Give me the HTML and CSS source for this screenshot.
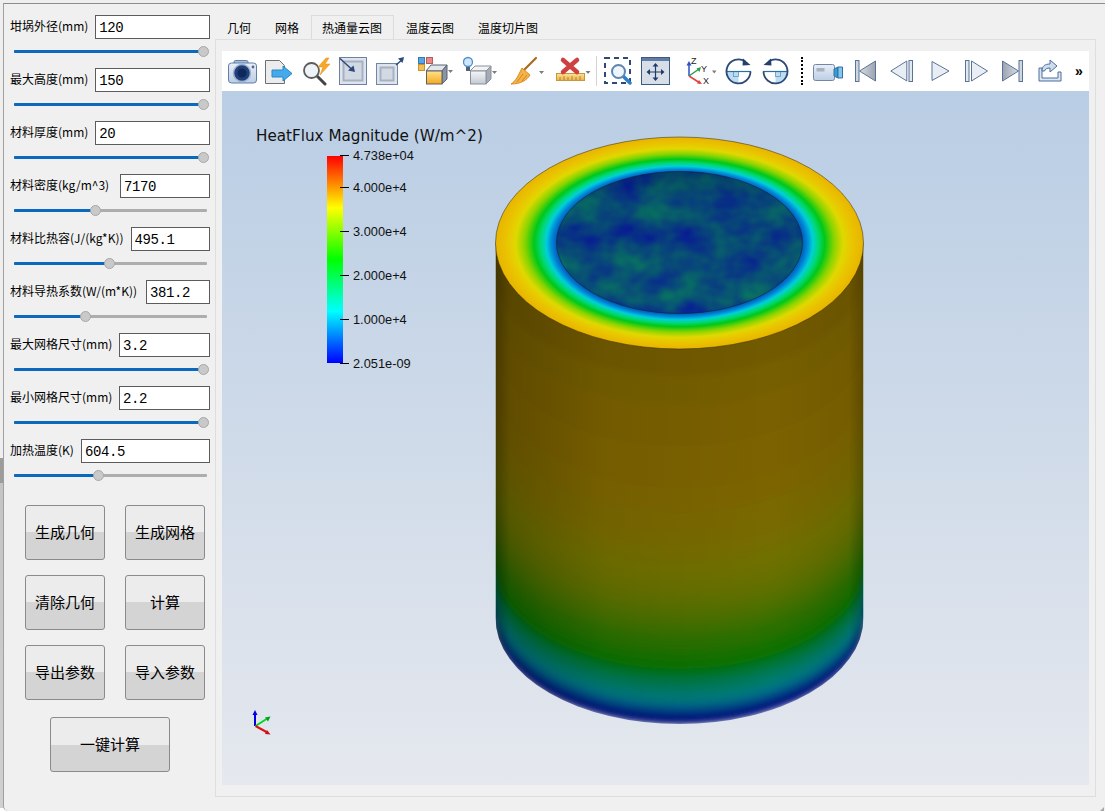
FILE: index.html
```html
<!DOCTYPE html>
<html lang="zh">
<head>
<meta charset="utf-8">
<title>坩埚热分析</title>
<link rel="stylesheet" href="styles.css">
</head>
<body>
<svg class="defs" aria-hidden="true">
  <defs>
    <linearGradient id="gBlue" x1="0" y1="0" x2="0" y2="1"><stop offset="0" stop-color="#e9eff7"/><stop offset="1" stop-color="#bccde3"/></linearGradient>
    <linearGradient id="gGrey" x1="0" y1="0" x2="1" y2="0"><stop offset="0" stop-color="#d9dde3"/><stop offset="1" stop-color="#9aa3b0"/></linearGradient>
    <linearGradient id="gGreyR" x1="1" y1="0" x2="0" y2="0"><stop offset="0" stop-color="#d9dde3"/><stop offset="1" stop-color="#9aa3b0"/></linearGradient>
    <linearGradient id="gGold" x1="0" y1="0" x2="0" y2="1"><stop offset="0" stop-color="#ffe38a"/><stop offset="1" stop-color="#f6a81e"/></linearGradient>
    <linearGradient id="gCube" x1="0" y1="0" x2="0" y2="1"><stop offset="0" stop-color="#f5f6f8"/><stop offset="1" stop-color="#c4c9d1"/></linearGradient>
    <linearGradient id="gRuler" x1="0" y1="0" x2="0" y2="1"><stop offset="0" stop-color="#fbe29a"/><stop offset="1" stop-color="#e9b44a"/></linearGradient>
  </defs>
</svg>
<div class="window">
  <aside class="sidebar">
    <div class="param"><div class="field"><label class="field-label">坩埚外径(mm)</label><input class="field-input" value="120"></div><div class="slider"><div class="fill" style="width:189px"></div><div class="knob" style="left:184px"></div></div></div>
    <div class="param"><div class="field"><label class="field-label">最大高度(mm)</label><input class="field-input" value="150"></div><div class="slider"><div class="fill" style="width:189px"></div><div class="knob" style="left:184px"></div></div></div>
    <div class="param"><div class="field"><label class="field-label">材料厚度(mm)</label><input class="field-input" value="20"></div><div class="slider"><div class="fill" style="width:189px"></div><div class="knob" style="left:184px"></div></div></div>
    <div class="param"><div class="field"><label class="field-label label-density">材料密度(kg/m^3)</label><input class="field-input" value="7170"></div><div class="slider"><div class="fill" style="width:81px"></div><div class="knob" style="left:76px"></div></div></div>
    <div class="param"><div class="field"><label class="field-label">材料比热容(J/(kg*K))</label><input class="field-input" value="495.1"></div><div class="slider"><div class="fill" style="width:95px"></div><div class="knob" style="left:90px"></div></div></div>
    <div class="param"><div class="field"><label class="field-label label-cond">材料导热系数(W/(m*K))</label><input class="field-input" value="381.2"></div><div class="slider"><div class="fill" style="width:71px"></div><div class="knob" style="left:66px"></div></div></div>
    <div class="param"><div class="field"><label class="field-label label-mesh">最大网格尺寸(mm)</label><input class="field-input" value="3.2"></div><div class="slider"><div class="fill" style="width:189px"></div><div class="knob" style="left:184px"></div></div></div>
    <div class="param"><div class="field"><label class="field-label label-mesh">最小网格尺寸(mm)</label><input class="field-input" value="2.2"></div><div class="slider"><div class="fill" style="width:189px"></div><div class="knob" style="left:184px"></div></div></div>
    <div class="param"><div class="field"><label class="field-label">加热温度(K)</label><input class="field-input" value="604.5"></div><div class="slider"><div class="fill" style="width:84px"></div><div class="knob" style="left:79px"></div></div></div>
    <div class="actions">
      <button class="btn">生成几何</button>
      <button class="btn">生成网格</button>
      <button class="btn">清除几何</button>
      <button class="btn">计算</button>
      <button class="btn">导出参数</button>
      <button class="btn">导入参数</button>
    </div>
    <button class="btn btn-wide">一键计算</button>
  </aside>

  <main class="main">
    <nav class="tabs">
      <span class="tab">几何</span>
      <span class="tab">网格</span>
      <span class="tab tab-active">热通量云图</span>
      <span class="tab">温度云图</span>
      <span class="tab">温度切片图</span>
    </nav>
    <section class="pane">
      <div class="toolbar">
        <svg class="ico" width="30" height="30" viewBox="0 0 30 30"><rect x="6" y="4.500" width="14" height="5" rx="1.500" fill="#a9bdd8" stroke="#5f7ea8"/><rect x="0.500" y="7" width="28" height="20" rx="3" fill="url(#gBlue)" stroke="#5f7ea8"/><circle cx="14" cy="17" r="8.500" fill="#20407a" stroke="#9db3d2" stroke-width="1.500"/><circle cx="14" cy="17" r="4.500" fill="#102858"/><circle cx="25" cy="11" r="1.400" fill="#4a6a98"/></svg>
        <svg class="ico m7" width="30" height="30" viewBox="0 0 30 30"><path d="M.5 4.500h14l5 5v18H.5z" fill="#ececec" stroke="#6a6f78"/><path d="M7 14h11v-4l9 7.500-9 7.500v-4H7z" fill="#45aaec" stroke="#2a86c8"/></svg>
        <svg class="ico m7" width="30" height="30" viewBox="0 0 30 30"><path d="M15 20l8 8" stroke="#444" stroke-width="3" stroke-linecap="round"/><circle cx="9.500" cy="14.500" r="7.500" fill="#eef3f8" stroke="#5c5c5c" stroke-width="1.800"/><path d="M24 2l-8 9h5l-3 8 10-11h-5l4-6z" fill="#f6a828" stroke="#e08a10" stroke-width=".5"/></svg>
        <svg class="ico m7" width="28" height="30" viewBox="0 0 28 30"><rect x="0.500" y="1.500" width="27" height="27" fill="#dfe4ec" stroke="#6b82a6"/><rect x="4.500" y="5.500" width="19" height="19" fill="#d3d9e2" stroke="#a6b2c4" stroke-width="2"/><path d="M1 2.500l12 11" stroke="#2c4a7c" stroke-width="1.500"/><path d="M16 16l-7-1.500 5.500-5z" fill="#2c4a7c"/></svg>
        <svg class="ico m9" width="30" height="30" viewBox="0 0 30 30"><rect x="0.500" y="7.500" width="21" height="21" fill="#dfe4ec" stroke="#7187a8"/><rect x="4.500" y="11.500" width="13" height="13" fill="#d3d9e2" stroke="#a6b2c4" stroke-width="2"/><path d="M20 9l7-6" stroke="#2c4a7c" stroke-width="1.500"/><path d="M28 1l-1.500 6-4.500-4.500z" fill="#2c4a7c"/></svg>
        <svg class="ico m12" width="37" height="30" viewBox="0 0 37 30"><rect x="0.500" y="1.500" width="6" height="6" fill="#5aa5e6" stroke="#3a78b8"/><rect x="8.500" y="1.500" width="6" height="6" fill="#e88a8a" stroke="#b85a5a"/><rect x="0.500" y="8.500" width="6" height="6" fill="#f4c056" stroke="#c89430"/><path d="M8 15l5-6h16l-5 6z" fill="#e3e6ea" stroke="#5a6270"/><path d="M24 15l5-6v14l-5 5z" fill="#8b94a2" stroke="#5a6270"/><rect x="8.500" y="15" width="15.500" height="13" fill="url(#gGold)" stroke="#5a6270"/><path class="caret" d="M30 14h5l-2.500 3z"/></svg>
        <svg class="ico m8" width="37" height="30" viewBox="0 0 37 30"><path d="M7 15l5-5h16l-5 5z" fill="#f2f3f5" stroke="#8a919c"/><path d="M23 15l5-5v13l-5 5z" fill="#a4abb6" stroke="#8a919c"/><rect x="7.500" y="15" width="15.500" height="13" fill="url(#gCube)" stroke="#8a919c"/><circle cx="5" cy="6" r="4.500" fill="#cfe6fb" stroke="#4d8fd0" stroke-width="1.300"/><rect x="3" y="11" width="4" height="4" fill="#52606f"/><path class="caret" d="M29 15h5l-2.500 3z"/></svg>
        <svg class="ico m11" width="34" height="30" viewBox="0 0 34 30"><path d="M25 2L12 15" stroke="#a86c20" stroke-width="2.200" stroke-linecap="round"/><path d="M11 12l8 7c-3 5-9 9-19 9 5-3 7-8 11-16z" fill="#f5b347" stroke="#d98c20"/><path d="M6 26l6-8M11 25l5-6" stroke="#c97f1a" stroke-width=".8"/><path class="caret" d="M28 15h5l-2.500 3z"/></svg>
        <svg class="ico m11" width="35" height="30" viewBox="0 0 35 30"><rect x="0.500" y="17.500" width="28" height="7" fill="url(#gRuler)" stroke="#c8963c"/><path d="M4 21v3M8 20v4M12 21v3M16 20v4M20 21v3M24 20v4" stroke="#a87420" stroke-width=".8"/><path d="M7 4l14 12M21 4L7 16" stroke="#cf4040" stroke-width="4.500" stroke-linecap="round"/><path class="caret" d="M29.500 15h5l-2.500 3z"/></svg>
        <span class="tool-sep m5"></span>
        <svg class="ico m7" width="28" height="30" viewBox="0 0 28 30"><rect x="1" y="2" width="25" height="25" fill="none" stroke="#2f4a78" stroke-width="2" stroke-dasharray="5 4"/><path d="M19 20l7 7" stroke="#2f80c8" stroke-width="3.500" stroke-linecap="round"/><circle cx="14.500" cy="15.500" r="6.500" fill="#eef5fb" stroke="#5f86b0" stroke-width="2"/></svg>
        <svg class="ico m9" width="29" height="30" viewBox="0 0 29 30"><rect x="0.500" y="1.500" width="28" height="27" fill="#d8dee8" stroke="#3b5a85"/><rect x="1" y="2" width="27" height="3" fill="#5f7da5"/><path d="M14.500 9v14M7.500 16h14" stroke="#1f3a68" stroke-width="1.200"/><path d="M14.500 7l3 3.500h-6zM14.500 25l3-3.500h-6zM5.500 16l3.500-3v6zM23.500 16l-3.500-3v6z" fill="#1f3a68"/></svg>
        <svg class="ico m16" width="31" height="30" viewBox="0 0 31 30"><path d="M3 20V8" stroke="#2a52c8" stroke-width="1.500"/><path d="M3 5l2.500 4.500h-5z" fill="#2a52c8"/><path d="M3 20l10-7" stroke="#25a050" stroke-width="1.500"/><path d="M15 11l-1.500 5-3-3.500z" fill="#25a050"/><path d="M3 20l11 7" stroke="#e04040" stroke-width="1.500"/><path d="M16 28l-5-.5 2-3.500z" fill="#e04040"/><text class="axis-t" x="5" y="8">Z</text><text class="axis-t" x="15" y="16">Y</text><text class="axis-t" x="17" y="28">X</text><path class="caret" d="M26 14.500h4.500l-2.250 3z"/></svg>
        <svg class="ico m8" width="27" height="30" viewBox="0 0 27 30"><path d="M1.500 15.500a12 12 0 0 0 12 12v-12z" fill="#bcdcf2"/><rect x="8.500" y="15.500" width="5" height="5" fill="none" stroke="#5d96c4" stroke-width=".8"/><path d="M1 15.500h25" stroke="#2b6ea8" stroke-width="1.200"/><path d="M20 5.300A12 12 0 1 0 25.500 15.500" fill="none" stroke="#2b4a78" stroke-width="1.800"/><path d="M25.500 9l-8 .5.500-7z" fill="#24406e"/></svg>
        <svg class="ico m10" width="27" height="30" viewBox="0 0 27 30"><path d="M25.500 15.500a12 12 0 0 1-12 12v-12z" fill="#bcdcf2"/><rect x="13.500" y="15.500" width="5" height="5" fill="none" stroke="#5d96c4" stroke-width=".8"/><path d="M1 15.500h25" stroke="#2b6ea8" stroke-width="1.200"/><path d="M7 5.300A12 12 0 1 1 1.500 15.500" fill="none" stroke="#2b4a78" stroke-width="1.800"/><path d="M1.500 9l8 .5-.5-7z" fill="#24406e"/></svg>
        <span class="dots m12"></span>
        <svg class="ico m10" width="31" height="30" viewBox="0 0 31 30"><rect x="0.500" y="8.500" width="21" height="16" rx="2" fill="url(#gBlue)" stroke="#7187a8"/><rect x="3.500" y="12" width="8" height="3.500" fill="#a8b2c0"/><path d="M21 13l4-2v11l-4-2z" fill="#2f9fd8" stroke="#3b6ea0"/><path d="M25 11h4.500v11H25z" fill="#7fc8ec" stroke="#3b6ea0"/></svg>
        <svg class="ico m11" width="21" height="30" viewBox="0 0 21 30"><rect x="0.500" y="4.500" width="3.500" height="21" fill="#cfd6e0" stroke="#5a7498"/><path d="M4.500 15L20.500 5v20z" fill="url(#gGrey)" stroke="#5a7498"/></svg>
        <svg class="ico m14" width="24" height="30" viewBox="0 0 24 30"><path d="M.8 15l16-10v20z" fill="#e9eef5" stroke="#5a7498"/><rect x="19" y="4.500" width="3.500" height="21" fill="#e2e8f0" stroke="#5a7498"/></svg>
        <svg class="ico m17" width="19" height="30" viewBox="0 0 19 30"><path d="M1 5.500v19L18 15z" fill="#e9eef5" stroke="#5a7498"/></svg>
        <svg class="ico m15" width="23" height="30" viewBox="0 0 23 30"><rect x="0.500" y="4.500" width="3.500" height="21" fill="#e2e8f0" stroke="#5a7498"/><path d="M6.500 5v20l16-10z" fill="#e9eef5" stroke="#5a7498"/></svg>
        <svg class="ico m14" width="22" height="30" viewBox="0 0 22 30"><path d="M.5 5v20l16-10z" fill="url(#gGreyR)" stroke="#5a7498"/><rect x="17" y="4.500" width="3.500" height="21" fill="#cfd6e0" stroke="#5a7498"/></svg>
        <svg class="ico m14" width="25" height="30" viewBox="0 0 25 30"><path d="M1 12v13h22v-9h-3v6H4V12z" fill="#dce6f2" stroke="#4a6e9c"/><path d="M4 15c0-5 3-7 8-7V4l7 6-7 6v-4c-3 0-5 1-5.500 3z" fill="#cfdcec" stroke="#4a6e9c"/></svg>
        <span class="more">»</span>
      </div>
      <div class="view">
        <svg class="scene" viewBox="222 91 866 694" role="img" aria-label="坩埚热通量云图">
          <defs>
            <radialGradient id="ring" cx=".5" cy=".5" r=".5">
              <stop offset=".66" stop-color="#0050b0"/>
              <stop offset=".695" stop-color="#0088d8"/>
              <stop offset=".725" stop-color="#00d0d8"/>
              <stop offset=".755" stop-color="#00d878"/>
              <stop offset=".79" stop-color="#00c818"/>
              <stop offset=".84" stop-color="#88d400"/>
              <stop offset=".89" stop-color="#e0d800"/>
              <stop offset=".94" stop-color="#eac400"/>
              <stop offset="1" stop-color="#e8b400"/>
            </radialGradient>
            <linearGradient id="sideShade" x1="0" y1="0" x2="1" y2="0">
              <stop offset="0" stop-color="#000" stop-opacity=".42"/>
              <stop offset=".04" stop-color="#000" stop-opacity=".22"/>
              <stop offset=".3" stop-color="#000" stop-opacity=".06"/>
              <stop offset=".75" stop-color="#000" stop-opacity="0"/>
              <stop offset=".96" stop-color="#000" stop-opacity=".06"/>
              <stop offset="1" stop-color="#000" stop-opacity=".25"/>
            </linearGradient>
            <linearGradient id="wallShade" x1="0" y1="0" x2="0" y2="1">
              <stop offset="0" stop-color="#002a50" stop-opacity=".4"/>
              <stop offset=".2" stop-color="#002a50" stop-opacity=".1"/>
              <stop offset="1" stop-color="#002a50" stop-opacity="0"/>
            </linearGradient>
            <clipPath id="sideClip"><path d="M495 243V618A184 106 0 0 0 863 618V243z"/></clipPath>
            <clipPath id="holeClip"><ellipse cx="679" cy="242.500" rx="123" ry="71"/></clipPath>
            <filter id="soft" x="-10%" y="-10%" width="120%" height="120%"><feGaussianBlur stdDeviation="3"/></filter>
            <filter id="mottle" x="0" y="0" width="100%" height="100%" color-interpolation-filters="sRGB">
              <feTurbulence type="fractalNoise" baseFrequency=".028 .036" numOctaves="3" seed="11"/>
              <feColorMatrix type="matrix" values="0 0 0 0 .03  .5 0 0 0 .04  -.3 0 0 0 .63  0 0 0 0 1"/>
            </filter>
          </defs>
          <g clip-path="url(#sideClip)">
            <g filter="url(#soft)">
              <path fill="#000a7c" d="M470 100V618H493A186 106 0 0 0 865 618H890V100z"/>
              <path fill="#00147c" d="M470 100V614H493A186 106 0 0 0 865 614H890V100z"/>
              <path fill="#002c80" d="M470 100V610H493A186 106 0 0 0 865 610H890V100z"/>
              <path fill="#004a86" d="M470 100V606H493A186 106 0 0 0 865 606H890V100z"/>
              <path fill="#006488" d="M470 100V602H493A186 106 0 0 0 865 602H890V100z"/>
              <path fill="#007480" d="M470 100V598H493A186 106 0 0 0 865 598H890V100z"/>
              <path fill="#007a74" d="M470 100V593H493A186 106 0 0 0 865 593H890V100z"/>
              <path fill="#007a64" d="M470 100V587H493A186 106 0 0 0 865 587H890V100z"/>
              <path fill="#007850" d="M470 100V581H493A186 106 0 0 0 865 581H890V100z"/>
              <path fill="#007638" d="M470 100V575H493A186 106 0 0 0 865 575H890V100z"/>
              <path fill="#007218" d="M470 100V569H493A186 106 0 0 0 865 569H890V100z"/>
              <path fill="#0a7202" d="M470 100V563H493A186 106 0 0 0 865 563H890V100z"/>
              <path fill="#187100" d="M470 100V555H493A186 106 0 0 0 865 555H890V100z"/>
              <path fill="#257000" d="M470 100V546H493A186 106 0 0 0 865 546H890V100z"/>
              <path fill="#2f7000" d="M470 100V537H493A186 106 0 0 0 865 537H890V100z"/>
              <path fill="#3d7000" d="M470 100V528H493A186 106 0 0 0 865 528H890V100z"/>
              <path fill="#4a7000" d="M470 100V519H493A186 106 0 0 0 865 519H890V100z"/>
              <path fill="#557000" d="M470 100V510H493A186 106 0 0 0 865 510H890V100z"/>
              <path fill="#5e7000" d="M470 100V500H493A186 106 0 0 0 865 500H890V100z"/>
              <path fill="#667000" d="M470 100V490H493A186 106 0 0 0 865 490H890V100z"/>
              <path fill="#6c7000" d="M470 100V480H493A186 106 0 0 0 865 480H890V100z"/>
              <path fill="#706f00" d="M470 100V470H493A186 106 0 0 0 865 470H890V100z"/>
              <path fill="#746d00" d="M470 100V456H493A186 106 0 0 0 865 456H890V100z"/>
              <path fill="#786b00" d="M470 100V442H493A186 106 0 0 0 865 442H890V100z"/>
              <path fill="#7a6800" d="M470 100V426H493A186 106 0 0 0 865 426H890V100z"/>
              <path fill="#7b6500" d="M470 100V405H493A186 106 0 0 0 865 405H890V100z"/>
              <path fill="#7c6200" d="M470 100V380H493A186 106 0 0 0 865 380H890V100z"/>
              <path fill="#7a6000" d="M470 100V340H493A186 106 0 0 0 865 340H890V100z"/>
              <path fill="#765e00" d="M470 100V300H493A186 106 0 0 0 865 300H890V100z"/>
              <path fill="#725a00" d="M470 100V270H493A186 106 0 0 0 865 270H890V100z"/>
            </g>
            <rect x="495" y="230" width="368" height="510" fill="url(#sideShade)"/>
          </g>
          <ellipse cx="679" cy="243" rx="184" ry="106" fill="url(#ring)" stroke="#2a2410" stroke-width=".5"/>
          <g clip-path="url(#holeClip)">
            <rect x="556" y="171" width="246" height="143" filter="url(#mottle)"/>
            <rect x="556" y="171" width="246" height="143" fill="url(#wallShade)"/>
          </g>
          <ellipse cx="679" cy="242.500" rx="123" ry="71" fill="none" stroke="#10203a" stroke-width=".6"/>
          <g class="triad">
            <path d="M254.500 726V713" stroke="#0000e6" stroke-width="2"/>
            <path d="M254.500 710l2.500 5h-5z" fill="#0000e6"/>
            <path d="M255 726l11-7" stroke="#00d820" stroke-width="2"/>
            <path d="M270 716.500l-2.500 5-3-4z" fill="#00a020"/>
            <path d="M255 726l11 6" stroke="#e01010" stroke-width="2"/>
            <path d="M270 734.500l-5.500-.5 2-4z" fill="#c81010"/>
          </g>
        </svg>
        <div class="legend">
          <div class="legend-title">HeatFlux Magnitude (W/m^2)</div>
          <div class="legend-ramp"></div>
          <span class="tick" style="top:28px"></span><span class="tick-label" style="top:20px">4.738e+04</span>
          <span class="tick" style="top:60px"></span><span class="tick-label" style="top:52px">4.000e+4</span>
          <span class="tick" style="top:104px"></span><span class="tick-label" style="top:96px">3.000e+4</span>
          <span class="tick" style="top:148px"></span><span class="tick-label" style="top:140px">2.000e+4</span>
          <span class="tick" style="top:192px"></span><span class="tick-label" style="top:184px">1.000e+4</span>
          <span class="tick" style="top:236px"></span><span class="tick-label" style="top:228px">2.051e-09</span>
        </div>
      </div>
    </section>
  </main>
</div>
<span class="grip"></span>
</body>
</html>
```
FILE: styles.css
```css
* { box-sizing: border-box; }
html, body { margin: 0; height: 100%; }
body {
  background: linear-gradient(to bottom, #efefef 0, #efefef 458px, #9c9c9c 458px, #9c9c9c 483px, #c4c4c4 483px, #d0d0d0 808px, #fff 808px);
  overflow: hidden;
  font-family: "Noto Sans CJK SC", "Liberation Sans", sans-serif;
  font-size: 12px;
  color: #000;
}
.defs { position: absolute; width: 0; height: 0; }

.window {
  display: flex;
  height: 808px;
  margin: 3px 0 0 3px;
  background: #f0f0f0;
  border-top: 1px solid #8c8c8c;
  border-left: 1px solid #a0a0a0;
  border-bottom-left-radius: 5px;
}

.sidebar {
  flex: none;
  width: 211px;
  padding: 11px 5px 0 6px;
}
.param { height: 53px; }
.field { display: flex; align-items: center; gap: 7px; height: 24px; }
.field-label { flex: none; white-space: nowrap; font-size: 12px; line-height: 16px; margin-top: -3px; }
.label-density { width: 103px; }
.label-cond { width: 129px; }
.label-mesh { width: 102px; }
.field-input {
  flex: 1;
  min-width: 0;
  height: 24px;
  padding: 2px 3px 0;
  border: 1px solid #5c5c5c;
  border-radius: 0;
  background: #fff;
  outline: none;
  font-family: "Liberation Mono", monospace;
  font-size: 14px;
  letter-spacing: -.4px;
  color: #000;
}
.slider {
  position: relative;
  height: 3px;
  margin: 10.500px 3px 0 4px;
  background: #adadad;
  border-radius: 1px;
}
.fill { height: 3px; background: #0a68bd; border-radius: 1px; }
.knob {
  position: absolute;
  top: -4px;
  width: 11px;
  height: 11px;
  border-radius: 50%;
  background: #c9c9c9;
  border: 1px solid #a8a8a8;
}

.actions {
  display: grid;
  grid-template-columns: 80px 80px;
  grid-auto-rows: 55px;
  column-gap: 20px;
  row-gap: 15px;
  margin: 13px 0 0 15px;
}
.btn {
  padding: 0 0 3px;
  border: 1px solid #8a8a8a;
  border-radius: 3px;
  background: linear-gradient(to bottom, #ececec 0, #ececec 50%, #d4d4d4 50%, #d4d4d4 100%);
  font-family: "Noto Sans CJK SC", sans-serif;
  font-size: 15px;
  color: #000;
}
.btn-wide {
  display: block;
  width: 120px;
  height: 55px;
  margin: 17px 0 0 40px;
}

.main {
  flex: 1;
  min-width: 0;
  display: flex;
  flex-direction: column;
  margin: 11px 9px 14px 0;
}
.tabs { display: flex; flex: none; height: 24px; }
.tab {
  display: flex;
  align-items: center;
  padding: 0 11px;
  font-size: 12px;
  border: 1px solid transparent;
  border-bottom: 0;
}
.tab-active { background: #f0f0f0; border-color: #dcdcdc; padding: 0 11px 0 10px; }
.pane {
  flex: 1;
  min-height: 0;
  display: flex;
  flex-direction: column;
  padding: 11px 6px 11px 6px;
  border: 1px solid #dedede;
  background: #f0f0f0;
}

.toolbar {
  flex: none;
  display: flex;
  align-items: center;
  height: 40px;
  padding-left: 6px;
  background: #fff;
}
.ico { flex: none; display: block; }
.caret { fill: #7b7b7b; }
.axis-t { font-family: "Liberation Sans", sans-serif; font-size: 9px; fill: #222; }
.m5 { margin-left: 5px; }
.m7 { margin-left: 7px; }
.m8 { margin-left: 8px; }
.m9 { margin-left: 9px; }
.m10 { margin-left: 10px; }
.m11 { margin-left: 11px; }
.m12 { margin-left: 12px; }
.m14 { margin-left: 14px; }
.m15 { margin-left: 15px; }
.m16 { margin-left: 16px; }
.m17 { margin-left: 17px; }
.tool-sep { flex: none; width: 1px; height: 30px; background: #d4d4d4; }
.dots { flex: none; width: 2px; height: 28px; border-left: 2px dotted #000; }
.more { margin-left: 12px; font-size: 14px; font-weight: 700; font-family: "Liberation Sans", sans-serif; line-height: 1; }

.view {
  position: relative;
  flex: 1;
  min-height: 0;
  background: linear-gradient(to bottom, #b9cde4 0%, #e5e8ee 100%);
}
.scene { display: block; width: 100%; height: 100%; }
.legend { position: absolute; left: 34px; top: 36px; font-family: "DejaVu Sans", sans-serif; color: #111; }
.legend-title { font-size: 15.200px; line-height: 18px; white-space: nowrap; }
.legend-ramp {
  position: absolute;
  left: 71px;
  top: 29px;
  width: 16px;
  height: 207px;
  background: linear-gradient(to bottom, #f00 0%, #ff0 25%, #0f0 50%, #0ff 75%, #00f 100%);
}
.tick { position: absolute; left: 84px; width: 9px; height: 1px; background: #000; }
.tick-label { position: absolute; left: 97px; font-family: "Liberation Sans", sans-serif; font-size: 12.800px; line-height: 18px; white-space: nowrap; }

.grip {
  position: absolute;
  right: 1px;
  bottom: 1px;
  width: 0;
  height: 0;
  border-left: 4px solid transparent;
  border-bottom: 4px solid #a8a8a8;
}
```
